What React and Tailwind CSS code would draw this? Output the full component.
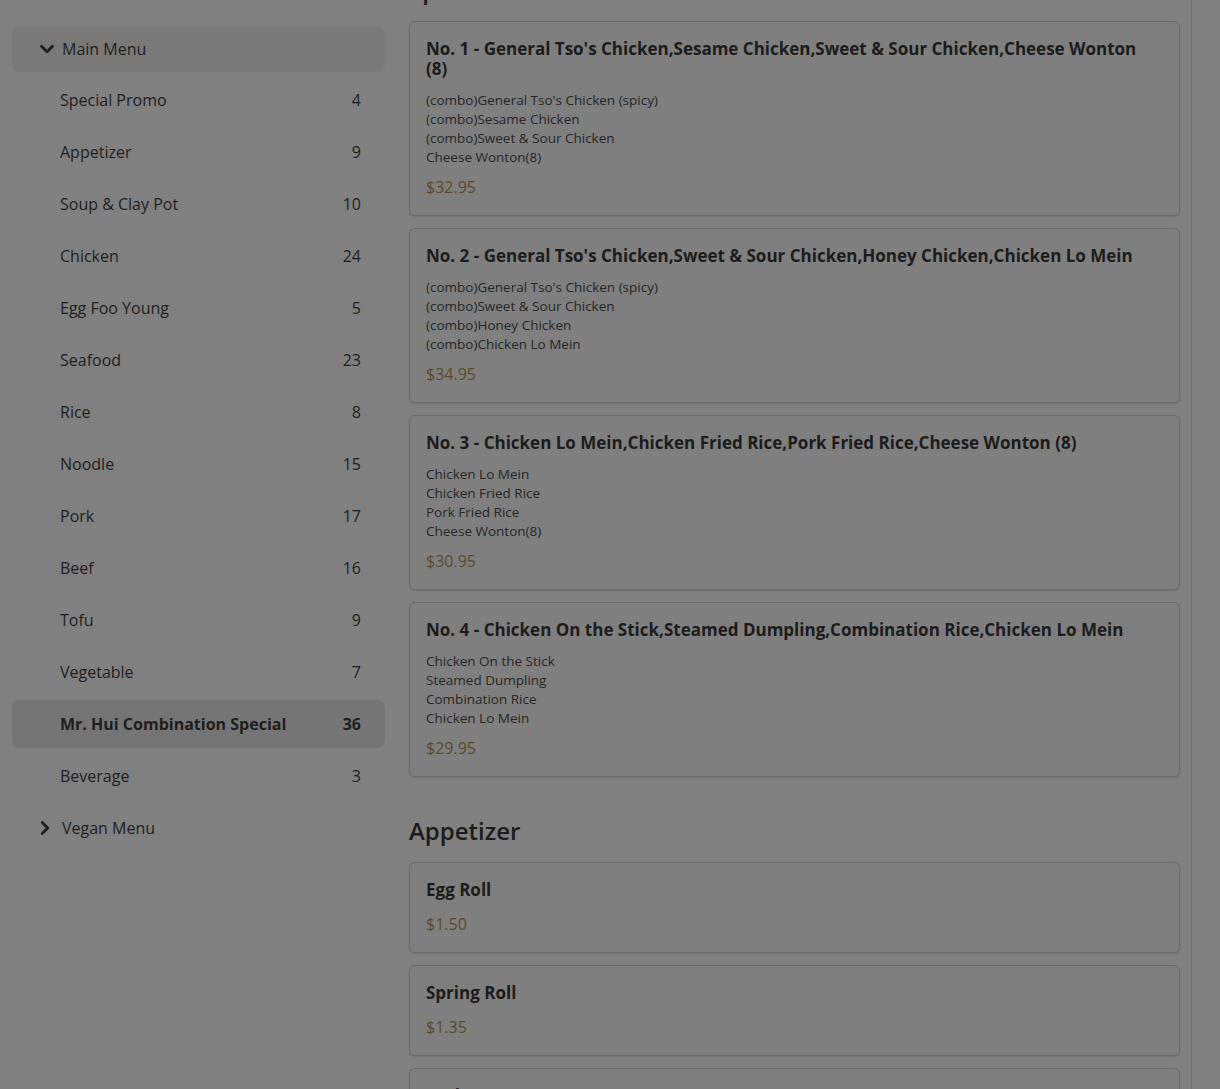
import { ChevronDown, ChevronRight } from 'lucide-react'

// Menu page, seen behind a dimmed modal backdrop (colours are the dimmed ones).
const categories = [
  ['Special Promo', 4],
  ['Appetizer', 9],
  ['Soup & Clay Pot', 10],
  ['Chicken', 24],
  ['Egg Foo Young', 5],
  ['Seafood', 23],
  ['Rice', 8],
  ['Noodle', 15],
  ['Pork', 17],
  ['Beef', 16],
  ['Tofu', 9],
  ['Vegetable', 7],
  ['Mr. Hui Combination Special', 36],
  ['Beverage', 3],
]

const sections = [
  {
    title: 'Special Promo',
    items: [
      {
        name: "No. 1 - General Tso's Chicken,Sesame Chicken,Sweet & Sour Chicken,Cheese Wonton (8)",
        lines: ["(combo)General Tso's Chicken (spicy)", '(combo)Sesame Chicken', '(combo)Sweet & Sour Chicken', 'Cheese Wonton(8)'],
        price: '$32.95',
      },
      {
        name: "No. 2 - General Tso's Chicken,Sweet & Sour Chicken,Honey Chicken,Chicken Lo Mein",
        lines: ["(combo)General Tso's Chicken (spicy)", '(combo)Sweet & Sour Chicken', '(combo)Honey Chicken', '(combo)Chicken Lo Mein'],
        price: '$34.95',
      },
      {
        name: 'No. 3 - Chicken Lo Mein,Chicken Fried Rice,Pork Fried Rice,Cheese Wonton (8)',
        lines: ['Chicken Lo Mein', 'Chicken Fried Rice', 'Pork Fried Rice', 'Cheese Wonton(8)'],
        price: '$30.95',
      },
      {
        name: 'No. 4 - Chicken On the Stick,Steamed Dumpling,Combination Rice,Chicken Lo Mein',
        lines: ['Chicken On the Stick', 'Steamed Dumpling', 'Combination Rice', 'Chicken Lo Mein'],
        price: '$29.95',
      },
    ],
  },
  {
    title: 'Appetizer',
    items: [
      { name: 'Egg Roll', lines: [], price: '$1.50' },
      { name: 'Spring Roll', lines: [], price: '$1.35' },
      { name: 'Crab Rangoon', lines: [], price: '$5.95' },
    ],
  },
]

function ItemCard({ item }) {
  return (
    <div className="rounded-md border border-[#6b6b6b] bg-[#7f7f7f] pt-[17px] pr-[22px] pb-4 pl-4 shadow-[0_1px_2px_rgba(0,0,0,0.12)]">
      <h3 className="text-[17px] font-bold leading-5 text-[#1c1c1c]">{item.name}</h3>
      {item.lines.length > 0 && (
        <div className="mt-3 text-[13.5px] leading-[19px] text-[#262626]">
          {item.lines.map((l) => (
            <div key={l}>{l}</div>
          ))}
        </div>
      )}
      <div className={`${item.lines.length ? 'mt-2' : 'mt-3'} text-[16px] leading-6 text-[#5a4a2b]`}>{item.price}</div>
    </div>
  )
}

export default function App() {
  return (
    <div
      className="flex h-[1089px] overflow-hidden bg-[#808080] text-[#1c1c1c]"
      style={{ fontFamily: "'Open Sans', 'Noto Sans', sans-serif" }}
    >
      <aside className="w-[397px] shrink-0 px-3">
        <h2 className="-mt-[26px] text-2xl font-semibold leading-8 text-[#1c1c1c]">Menus</h2>
        <nav className="mt-5 flex flex-col gap-1">
          <div className="flex h-[46px] items-center gap-1 rounded-lg bg-[#7b7977] pl-6 text-[16px] text-[#1e1e1e]">
            <ChevronDown size={22} strokeWidth={3} />
            <span>Main Menu</span>
          </div>
          {categories.map(([name, n]) => {
            const active = name === 'Mr. Hui Combination Special'
            return (
              <div
                key={name}
                className={`flex h-12 items-center justify-between rounded-lg pl-12 pr-6 text-[16px] text-[#1e1e1e] ${
                  active ? 'bg-[#757575] font-bold' : ''
                }`}
              >
                <span>{name}</span>
                <span>{n}</span>
              </div>
            )
          })}
          <div className="flex h-12 items-center gap-1.5 pl-[22px] text-[16px] text-[#1e1e1e]">
            <ChevronRight size={22} strokeWidth={3} />
            <span>Vegan Menu</span>
          </div>
        </nav>
      </aside>

      <main className="flex-1 border-r border-[#6e6e6e] pl-3 pr-[11px]">
        <div className="-mt-[26px]">
          {sections.map((s, i) => (
            <section key={s.title} className={i ? 'mt-[38px]' : ''}>
              <h2 className="mb-[15px] text-2xl font-semibold leading-8 text-[#1c1c1c]">{s.title}</h2>
              <div className="flex flex-col gap-3">
                {s.items.map((it) => (
                  <ItemCard key={it.name} item={it} />
                ))}
              </div>
            </section>
          ))}
        </div>
      </main>
      <div className="w-[28px] shrink-0" />
    </div>
  )
}
